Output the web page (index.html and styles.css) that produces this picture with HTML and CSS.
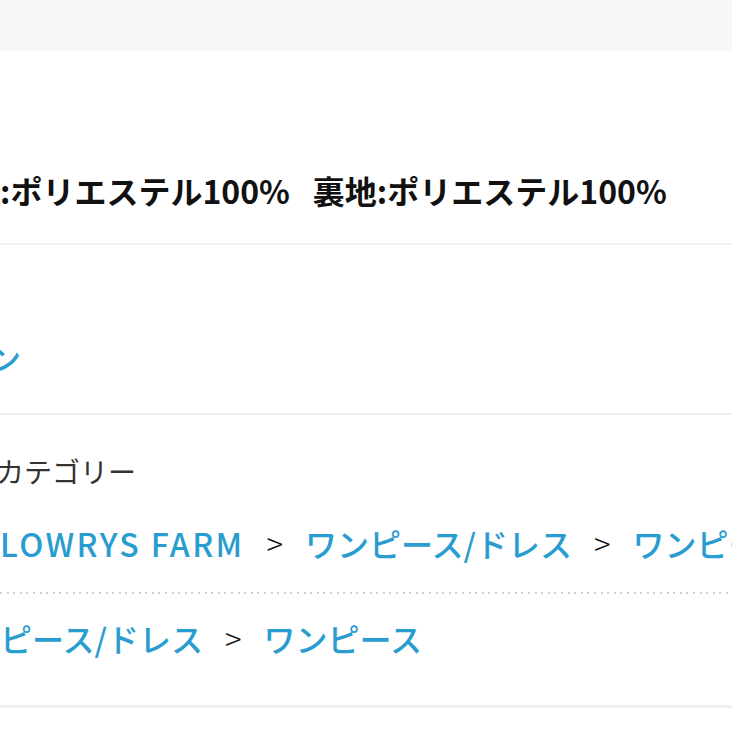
FILE: index.html
```html
<!DOCTYPE html>
<html lang="ja">
<head>
<meta charset="utf-8">
<title>商品情報</title>
<link rel="stylesheet" href="styles.css">
</head>
<body>
<div class="page">
  <div class="topbar"></div>
  <section class="sec sec-material">
    <p class="material"><span class="part">:ポリエステル100%</span><span class="part part-lining">裏地:ポリエステル100%</span></p>
  </section>
  <section class="sec sec-link">
    <a class="link-clip">ン</a>
  </section>
  <section class="sec sec-category">
    <div class="cat-label">カテゴリー</div>
    <nav class="crumbs crumbs-first">
      <a class="crumb crumb-latin">LOWRYS FARM</a><span class="sep">&gt;</span><a class="crumb">ワンピース/ドレス</a><span class="sep">&gt;</span><a class="crumb">ワンピース</a>
    </nav>
    <nav class="crumbs crumbs-second">
      <a class="crumb crumb-clip">ピース/ドレス</a><span class="sep">&gt;</span><a class="crumb">ワンピース</a>
    </nav>
  </section>
</div>
</body>
</html>
```
FILE: styles.css
```css
html, body {
  margin: 0;
  padding: 0;
  background: #ffffff;
}
body {
  width: 732px;
  height: 732px;
  overflow: hidden;
  font-family: "Noto Sans CJK JP", "Noto Sans", sans-serif;
  color: #1a1a1a;
}
.page {
  display: flex;
  flex-direction: column;
  overflow: hidden;
}
.topbar {
  height: 51px;
  background: #f7f7f7;
}
.sec {
  border-bottom: 2px solid #f0f0f0;
  overflow: hidden;
}
.sec-material {
  padding: 119px 0 33px;
}
.material {
  margin: 0;
  font-size: 32px;
  line-height: 40px;
  font-weight: 700;
  white-space: nowrap;
  color: #111;
}
.part-lining {
  margin-left: 23px;
}
.sec-link {
  height: 170px;
  padding-top: 92px;
  box-sizing: border-box;
}
.link-clip {
  display: inline-block;
  margin-left: -11px;
  font-size: 32px;
  line-height: 40px;
  font-weight: 500;
  color: #2a9dd0;
}
.sec-category {
  padding-top: 38px;
  border-bottom-width: 3px;
}
.cat-label {
  margin-left: -4px;
  font-size: 28px;
  line-height: 36px;
  color: #333;
}
.crumbs {
  display: flex;
  align-items: flex-start;
  white-space: nowrap;
  font-size: 32px;
  line-height: 40px;
}
.crumbs-first {
  margin-top: 34px;
  padding-bottom: 29px;
  height: 71px;
  box-sizing: border-box;
  background-image: repeating-linear-gradient(to right, #cfcfcf 0 2px, transparent 2px 6.6px);
  background-size: 100% 2px;
  background-repeat: no-repeat;
  background-position: left bottom;
}
.crumbs-second {
  padding-top: 24px;
  padding-bottom: 47px;
}
.crumb {
  color: #2a9dd0;
  font-weight: 500;
}
.crumb-latin {
  letter-spacing: 2.4px;
  margin-right: 0;
}
.crumb-clip {
  margin-left: 0;
}
.sep {
  margin: 0 22px;
  font-size: 31px;
  font-weight: 300;
  color: #111;
}
```
